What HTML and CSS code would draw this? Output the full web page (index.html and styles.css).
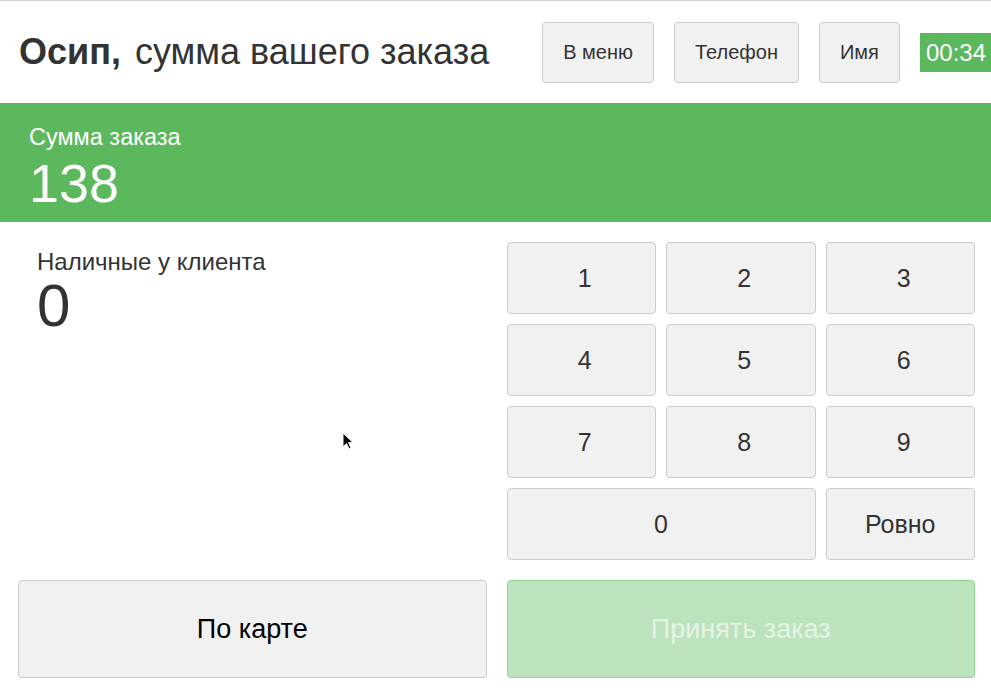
FILE: index.html
```html
<!DOCTYPE html>
<html lang="ru">
<head>
<meta charset="utf-8">
<title>Сумма заказа</title>
<link rel="stylesheet" href="styles.css">
</head>
<body>
<div class="page">
  <header class="header">
    <h1 class="title"><b class="name">Осип,</b> сумма вашего заказа</h1>
    <nav class="nav">
      <button class="btn nav-btn">В меню</button>
      <button class="btn nav-btn">Телефон</button>
      <button class="btn nav-btn">Имя</button>
      <div class="timer">00:34</div>
    </nav>
  </header>
  <section class="total">
    <div class="total-label">Сумма заказа</div>
    <div class="total-value">138</div>
  </section>
  <main class="main">
    <div class="cash">
      <div class="cash-label">Наличные у клиента</div>
      <div class="cash-value">0</div>
    </div>
    <div class="keypad">
      <button class="btn key digit">1</button>
      <button class="btn key digit">2</button>
      <button class="btn key digit">3</button>
      <button class="btn key digit">4</button>
      <button class="btn key digit">5</button>
      <button class="btn key digit">6</button>
      <button class="btn key digit">7</button>
      <button class="btn key digit">8</button>
      <button class="btn key digit">9</button>
      <button class="btn key key-wide">0</button>
      <button class="btn key">Ровно</button>
    </div>
    <button class="btn big card">По карте</button>
    <button class="btn big accept" disabled>Принять заказ</button>
  </main>
  <svg class="cursor" width="12" height="19" viewBox="0 0 12 19">
    <path d="M1 1 L1 15 L4.5 11.5 L7 17 L9 16 L6.6 10.6 L11 10.6 Z" fill="#000" stroke="#fff" stroke-width="1"/>
  </svg>
</div>
</body>
</html>
```
FILE: styles.css
```css
html, body {
  margin: 0;
  padding: 0;
  background: #fff;
  overflow: hidden;
}
body {
  font-family: "Liberation Sans", Arial, sans-serif;
  color: #333;
}
.page {
  position: relative;
  width: 991px;
  height: 697px;
  overflow: hidden;
}
.header {
  display: flex;
  align-items: center;
  height: 102px;
  border-top: 1px solid #d0d0d0;
  padding-left: 19px;
}
.title {
  margin: 0;
  font-size: 36px;
  line-height: 40px;
  font-weight: normal;
  white-space: nowrap;
  color: #333;
}
.name {
  font-weight: bold;
  margin-right: 4px;
}
.nav {
  margin-left: auto;
  display: flex;
  align-items: center;
  gap: 20px;
  flex-shrink: 0;
}
.btn {
  font-family: "Liberation Sans", Arial, sans-serif;
  background: #f1f1f1;
  border: 1px solid #cccccc;
  border-radius: 4px;
  color: #333;
  padding: 0;
  cursor: pointer;
}
.nav-btn {
  height: 61px;
  padding: 0 20px;
  font-size: 20px;
}
.timer {
  height: 39px;
  line-height: 39px;
  padding: 0 5px 0 6px;
  background: #5cb85c;
  color: #fff;
  font-size: 24px;
  white-space: nowrap;
}
.total {
  background: #5cb85c;
  color: #fff;
  height: 119px;
  box-sizing: border-box;
  padding: 21px 0 0 29px;
}
.total-label {
  font-size: 23.5px;
  line-height: 26px;
}
.total-value {
  margin-top: 6px;
  font-size: 54px;
  line-height: 54px;
}
.main {
  display: grid;
  grid-template-columns: 1fr 1fr;
  column-gap: 20px;
  row-gap: 20px;
  padding: 20px 16px 0 18px;
}
.cash {
  padding: 7px 0 0 19px;
}
.cash-label {
  font-size: 24px;
  line-height: 26px;
}
.cash-value {
  margin-top: 1px;
  font-size: 60px;
  line-height: 60px;
}
.keypad {
  display: grid;
  grid-template-columns: repeat(3, 1fr);
  grid-auto-rows: 72px;
  gap: 10px;
}
.key {
  font-size: 25px;
}
.digit {
  padding-left: 7px;
}
.key-wide {
  grid-column: span 2;
}
.big {
  height: 98px;
  font-size: 27px;
}
.card {
  color: #000;
}
.accept {
  background: #bde3be;
  border-color: #8fd490;
  color: rgba(255, 255, 255, 0.6);
  cursor: default;
}
.cursor {
  position: absolute;
  left: 342px;
  top: 432px;
}
```
